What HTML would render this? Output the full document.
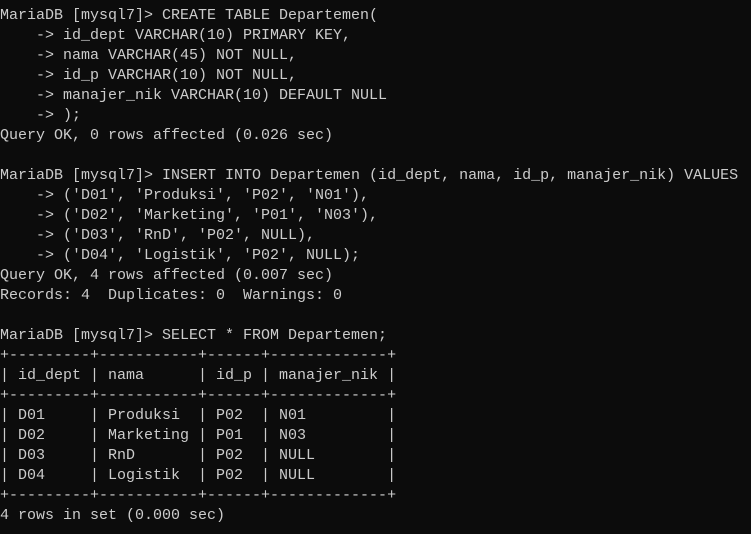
<!DOCTYPE html>
<html><head><meta charset="utf-8"><style>
html,body{margin:0;padding:0;background:#0c0c0c;width:751px;height:534px;overflow:hidden}
pre{margin:0;padding:6px 0 0 0;font-family:"Liberation Mono",monospace;font-size:15px;line-height:20px;color:#cccccc;white-space:pre}
</style></head><body><pre>MariaDB [mysql7]> CREATE TABLE Departemen(
    -> id_dept VARCHAR(10) PRIMARY KEY,
    -> nama VARCHAR(45) NOT NULL,
    -> id_p VARCHAR(10) NOT NULL,
    -> manajer_nik VARCHAR(10) DEFAULT NULL
    -> );
Query OK, 0 rows affected (0.026 sec)

MariaDB [mysql7]> INSERT INTO Departemen (id_dept, nama, id_p, manajer_nik) VALUES
    -> ('D01', 'Produksi', 'P02', 'N01'),
    -> ('D02', 'Marketing', 'P01', 'N03'),
    -> ('D03', 'RnD', 'P02', NULL),
    -> ('D04', 'Logistik', 'P02', NULL);
Query OK, 4 rows affected (0.007 sec)
Records: 4  Duplicates: 0  Warnings: 0

MariaDB [mysql7]> SELECT * FROM Departemen;
+---------+-----------+------+-------------+
| id_dept | nama      | id_p | manajer_nik |
+---------+-----------+------+-------------+
| D01     | Produksi  | P02  | N01         |
| D02     | Marketing | P01  | N03         |
| D03     | RnD       | P02  | NULL        |
| D04     | Logistik  | P02  | NULL        |
+---------+-----------+------+-------------+
4 rows in set (0.000 sec)</pre></body></html>
